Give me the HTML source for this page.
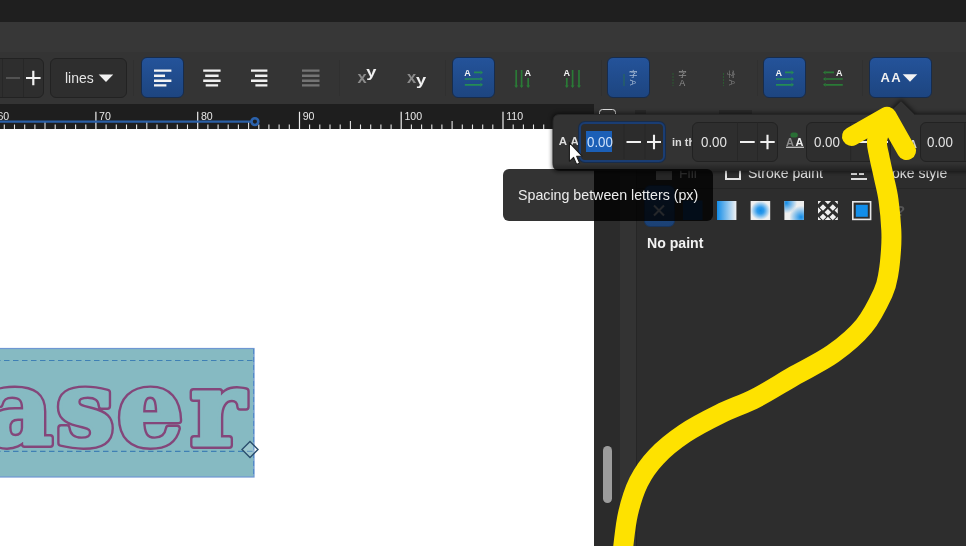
<!DOCTYPE html>
<html><head><meta charset="utf-8"><title>Inkscape text toolbar</title>
<style>
html,body{margin:0;padding:0;background:#2d2d2d;}
body{width:966px;height:546px;overflow:hidden;position:relative;font-family:"Liberation Sans","Noto Sans CJK SC",sans-serif;color:#e6e6e6;}
#root{position:absolute;left:0;top:0;width:966px;height:546px;overflow:hidden;background:#2d2d2d;filter:blur(0.45px);}
.abs{position:absolute;}
#titlebar{left:0;top:0;width:966px;height:22px;background:#1f1f1f;}
#menubar{left:0;top:22px;width:966px;height:29.5px;background:#373737;}
#toolbar{left:0;top:51.5px;width:966px;height:62.5px;background:#343434;}
#ruler{left:0;top:103.5px;width:594px;height:25.5px;background:#1e1e1e;overflow:hidden;}
#canvas{left:0;top:129px;width:594px;height:417px;background:#ffffff;}
.box{position:absolute;border:1px solid #222222;background:#2e2e2e;border-radius:6px;box-sizing:border-box;}
.btn{position:absolute;top:57.4px;height:41px;width:43px;margin-left:-0.5px;border-radius:6px;box-sizing:border-box;}
.btn.on{background:linear-gradient(#24539a,#1d4580);border:1px solid #172c4c;}
.sep{position:absolute;top:60px;height:36px;width:1px;background:#303030;}
.rl{position:absolute;top:6px;font-size:10.5px;color:#e8e8e8;letter-spacing:-0.2px;}
.num{position:absolute;font-size:14.9px;color:#e4e4e4;transform:scaleX(0.895);transform-origin:0 0;}
</style></head><body><div id="root">
<div id="titlebar" class="abs"></div>
<div id="menubar" class="abs"></div>
<div id="toolbar" class="abs"></div>
<!--TOOLBAR-S-->
<div class="box" style="left:-10px;top:58px;width:54px;height:40px;"></div>
<div class="box" style="left:50px;top:58px;width:77px;height:40px;"></div>
<div class="abs" style="left:65px;top:68.8px;font-size:15px;color:#e4e4e4;line-height:18px;transform:scaleX(0.93);transform-origin:0 0;">lines</div>
<div class="btn on" style="left:141.5px;"></div>
<div class="btn on" style="left:452.6px;"></div>
<div class="btn on" style="left:607.6px;"></div>
<div class="btn on" style="left:763.5px;"></div>
<div class="btn on" style="left:869.5px;width:62.5px;"></div>
<div class="sep" style="left:133px;"></div>
<div class="sep" style="left:339px;"></div>
<div class="sep" style="left:445px;"></div>
<div class="sep" style="left:601px;"></div>
<div class="sep" style="left:757px;"></div>
<div class="sep" style="left:862px;"></div>
<svg class="abs" style="left:0;top:52px;" width="966" height="52" viewBox="0 52 966 52">
 <g stroke="#272727" stroke-width="1"><path d="M2.5,59V97M23.5,59V97"/></g>
 <path d="M6,78H20" stroke="#525252" stroke-width="2"/>
 <path d="M26,78H40.6M33.3,70.7V85.3" stroke="#f2f2f2" stroke-width="2.2"/>
 <path d="M98.7,74.4H113.2L106,82Z" fill="#f2f2f2"/>
 <!-- align left -->
 <g stroke="#f4f4f4" stroke-width="2.4"><path d="M154,70.6H171.4M154,75.7H165M154,80.7H171.4M154,85.4H166.4"/></g>
 <g stroke="#f0f0f0" stroke-width="2.4"><path d="M203.2,70.6H220.6M205.2,75.7H218.6M203.2,80.7H220.6M205.7,85.4H218.1"/></g>
 <g stroke="#f0f0f0" stroke-width="2.4"><path d="M251,70.6H267.4M255,75.7H267.4M251,80.7H267.4M255.4,85.4H267.4"/></g>
 <g stroke="#747474" stroke-width="2.4"><path d="M302,70.6H319.5M302,75.7H319.5M302,80.7H319.5M302,85.4H319.5"/></g>
 <!-- super / sub script -->
 <g font-family="Liberation Sans, sans-serif" font-weight="bold">
 <text x="357.6" y="82.7" font-size="16.5" fill="#8a8a8a">x</text>
 <text transform="translate(366.3,76.5) scale(1.32,1)" font-size="13.8" fill="#f0f0f0">y</text>
 <text x="407.1" y="82.7" font-size="16.5" fill="#8a8a8a">x</text>
 <text transform="translate(416,84.7) scale(1.32,1)" font-size="13.8" fill="#f0f0f0">y</text>
 </g>
 <!-- horizontal text icon (on) -->
 <text x="464.3" y="75.8" font-family="Liberation Sans, sans-serif" font-weight="bold" font-size="9" fill="#f4f4f4">A</text>
 <g stroke="#258c55" stroke-width="1.7"><path d="M474,72.4H480.6M464.8,79H480.6M464.8,84.8H480.6"/></g>
 <!-- vertical RL -->
 <g stroke="#2a7a36" stroke-width="1.7"><path d="M516.2,70V86M521.6,70V86M528.2,78V86"/></g>
 <text x="524.6" y="75.8" font-family="Liberation Sans, sans-serif" font-weight="bold" font-size="9" fill="#f4f4f4">A</text>
 <!-- vertical LR -->
 <g stroke="#2a7a36" stroke-width="1.7"><path d="M566.8,78V86M572.6,70V86M579,70V86"/></g>
 <text x="563.6" y="75.8" font-family="Liberation Sans, sans-serif" font-weight="bold" font-size="9" fill="#f4f4f4">A</text>
 <!-- orientation icons -->
 <path d="M624,74V86" stroke="#2a6a55" stroke-width="1"/>
 <text x="629" y="77" font-family="Noto Sans CJK SC, sans-serif" font-size="8.5" fill="#a9bdd6">字</text>
 <text transform="translate(630,79.6) rotate(90)" x="0" y="0" font-family="Liberation Sans, sans-serif" font-size="9" fill="#a9bdd6">A</text>
 <path d="M673,73V86" stroke="#2a5a30" stroke-width="1" stroke-dasharray="2 1"/>
 <text x="678.3" y="77" font-family="Noto Sans CJK SC, sans-serif" font-size="8.5" fill="#8f8f8f">字</text>
 <text x="679.3" y="86" font-family="Liberation Sans, sans-serif" font-size="9" fill="#8f8f8f">A</text>
 <path d="M723.5,73V86" stroke="#2a5a30" stroke-width="1" stroke-dasharray="2 1"/>
 <text transform="translate(728,70) rotate(90)" x="0" y="0" font-family="Noto Sans CJK SC, sans-serif" font-size="8.5" fill="#7c7c7c">字</text>
 <text transform="translate(728.5,79.6) rotate(90)" x="0" y="0" font-family="Liberation Sans, sans-serif" font-size="9" fill="#7c7c7c">A</text>
 <!-- direction LTR (on) -->
 <text x="775.5" y="75.8" font-family="Liberation Sans, sans-serif" font-weight="bold" font-size="9" fill="#f4f4f4">A</text>
 <g stroke="#258c55" stroke-width="1.7"><path d="M785,72.4H791.6M776,79H791.6M776,84.8H791.6"/></g>
 <!-- direction RTL -->
 <text x="836" y="75.8" font-family="Liberation Sans, sans-serif" font-weight="bold" font-size="9" fill="#f4f4f4">A</text>
 <g stroke="#2a7a36" stroke-width="1.7"><path d="M825.6,72.4H834M825.6,79H842.8M825.6,84.8H842.8"/></g>
 <path d="M480.4,70.4l2.6,2l-2.6,2ZM480.4,77l2.6,2l-2.6,2ZM480.4,82.8l2.6,2l-2.6,2ZM791.4,70.4l2.6,2l-2.6,2ZM791.4,77l2.6,2l-2.6,2ZM791.4,82.8l2.6,2l-2.6,2Z" fill="#258c55"/>
 <path d="M514.2,85.5h4l-2,2.6ZM519.6,85.5h4l-2,2.6ZM526.2,85.5h4l-2,2.6ZM564.8,85.5h4l-2,2.6ZM570.6,85.5h4l-2,2.6ZM577,85.5h4l-2,2.6ZM825.6,70.4l-2.6,2l2.6,2ZM825.6,77l-2.6,2l2.6,2ZM825.6,82.8l-2.6,2l2.6,2Z" fill="#2a7a36"/>
 <!-- AA dropdown -->
 <text x="880.6" y="82.2" font-family="Liberation Sans, sans-serif" font-weight="bold" font-size="13" letter-spacing="1.2" fill="#f0f0f0">AA</text>
 <path d="M902.7,74.3H917.3L910,81.7Z" fill="#f4f4f4"/>
</svg>
<!--TOOLBAR-E-->
<!--RULER-S-->
<div id="ruler" class="abs"></div>
<svg class="abs" style="left:0;top:104px;" width="594" height="25" viewBox="0 104 594 25">
 <path d="M4.3,124.6V129M14.5,124.6V129M24.7,124.6V129M34.9,124.6V129M55.2,124.6V129M65.4,124.6V129M75.6,124.6V129M85.8,124.6V129M106.1,124.6V129M116.3,124.6V129M126.5,124.6V129M136.6,124.6V129M157.0,124.6V129M167.2,124.6V129M177.3,124.6V129M187.5,124.6V129M207.9,124.6V129M218.1,124.6V129M228.2,124.6V129M238.4,124.6V129M258.8,124.6V129M268.9,124.6V129M279.1,124.6V129M289.3,124.6V129M309.6,124.6V129M319.8,124.6V129M330.0,124.6V129M340.2,124.6V129M360.5,124.6V129M370.7,124.6V129M380.9,124.6V129M391.1,124.6V129M411.4,124.6V129M421.6,124.6V129M431.8,124.6V129M441.9,124.6V129M462.3,124.6V129M472.5,124.6V129M482.7,124.6V129M492.8,124.6V129M513.2,124.6V129M523.4,124.6V129M533.5,124.6V129M543.7,124.6V129M564.1,124.6V129M574.2,124.6V129M584.4,124.6V129" stroke="#e4e4e4" stroke-width="1.1"/>
 <path d="M45.0,121V129M146.8,121V129M248.6,121V129M350.4,121V129M452.1,121V129M553.9,121V129" stroke="#e4e4e4" stroke-width="1.1"/>
 <path d="M-5.8,111.8V129M95.9,111.8V129M197.7,111.8V129M299.5,111.8V129M401.2,111.8V129M503.0,111.8V129" stroke="#ececec" stroke-width="1.2"/>
 <text x="-2.6" y="120" font-family="Liberation Sans, sans-serif" font-size="10.6" fill="#e6e6e6">60</text>
 <text x="99.1" y="120" font-family="Liberation Sans, sans-serif" font-size="10.6" fill="#e6e6e6">70</text>
 <text x="200.9" y="120" font-family="Liberation Sans, sans-serif" font-size="10.6" fill="#e6e6e6">80</text>
 <text x="302.7" y="120" font-family="Liberation Sans, sans-serif" font-size="10.6" fill="#e6e6e6">90</text>
 <text x="404.4" y="120" font-family="Liberation Sans, sans-serif" font-size="10.6" fill="#e6e6e6">100</text>
 <text x="506.2" y="120" font-family="Liberation Sans, sans-serif" font-size="10.6" fill="#e6e6e6">110</text>
 <path d="M0,121.6H251" stroke="#2b60a8" stroke-width="2.2"/>
 <circle cx="254.9" cy="121.6" r="3.4" fill="#1e1e1e" stroke="#2b62ac" stroke-width="2.6"/>
</svg>
<!--RULER-E-->
<div id="canvas" class="abs"></div>
<!--CANVAS-S-->
<svg class="abs" style="left:0;top:129px;" width="594" height="417" viewBox="0 129 594 417">
 <rect x="-5" y="348.5" width="259" height="128.5" fill="#86bac2" stroke="#6e97d2" stroke-width="1.2"/>
 <g font-family="DejaVu Serif, Liberation Serif, serif" font-weight="bold" font-size="103" stroke-linejoin="round">
  <text id="lz1" x="-90 -14.2 56.2 117.4 190.6" y="445.2" fill="none" stroke="#84467a" stroke-width="7.8">Laser</text>
  <text id="lz2" x="-90 -14.2 56.2 117.4 190.6" y="445.2" fill="#86bac2" stroke="#86bac2" stroke-width="3">Laser</text>
 </g>
 <path d="M-5,360.5H253.5M-5,451.4H253.5" stroke="#3f80b4" stroke-width="1.1" stroke-dasharray="5.5 3.5"/>
 <path d="M253.6,349V477" stroke="#4f86c6" stroke-width="1" stroke-dasharray="5 3"/>
 <path d="M250,441.4L258,449.4L250,457.4L242,449.4Z" fill="#e9f3f5" fill-opacity="0.25" stroke="#2b4e6d" stroke-width="1.4"/>
</svg>
<!--CANVAS-E-->
<!--PANEL-S-->
<div class="abs" style="left:594px;top:103px;width:372px;height:443px;background:#2d2d2d;"></div>
<div class="abs" style="left:594px;top:103px;width:372px;height:11px;background:#343434;"></div>
<div class="abs" style="left:635px;top:110px;width:11px;height:5px;background:#2a2a2a;"></div>
<div class="abs" style="left:719px;top:110px;width:33px;height:5px;background:#2a2a2a;"></div>
<div class="abs" style="left:594px;top:114px;width:26px;height:432px;background:#2b2b2b;"></div>
<div class="abs" style="left:620px;top:114px;width:16px;height:432px;background:#333333;"></div>
<div class="abs" style="left:636px;top:114px;width:1px;height:432px;background:#262626;"></div>
<div class="abs" style="left:598.5px;top:108.5px;width:17.5px;height:14px;box-sizing:border-box;border:1.6px solid #dedede;border-radius:3.5px;"></div>
<div class="abs" style="left:637px;top:187.5px;width:329px;height:1px;background:#262626;"></div>
<div class="abs" style="left:602.5px;top:445.5px;width:9.5px;height:57.5px;border-radius:5px;background:#9c9c9c;"></div>
<!-- tabs -->
<div class="abs" style="left:655.5px;top:171px;width:16px;height:8.5px;background:#bdbdbd;"></div>
<div class="abs" style="left:678.5px;top:164.9px;font-size:15px;line-height:16px;color:#e0e0e0;transform:scaleX(0.935);transform-origin:0 0;">Fill</div>
<div class="abs" style="left:724.5px;top:164px;width:16px;height:15.5px;box-sizing:border-box;border:2.1px solid #e2e2e2;"></div>
<div class="abs" id="tsp" style="left:747.6px;top:164.9px;font-size:15px;line-height:16px;color:#e4e4e4;white-space:nowrap;transform:scaleX(0.935);transform-origin:0 0;">Stroke paint</div>
<div class="abs" style="left:851px;top:173px;width:5.5px;height:2px;background:#dcdcdc;"></div>
<div class="abs" style="left:859px;top:173px;width:4.5px;height:2px;background:#dcdcdc;"></div>
<div class="abs" style="left:851px;top:178px;width:16px;height:2px;background:#dcdcdc;"></div>
<div class="abs" id="tss" style="left:874px;top:164.9px;font-size:15px;line-height:16px;color:#e4e4e4;white-space:nowrap;transform:scaleX(0.935);transform-origin:0 0;">Stroke style</div>
<!-- paint type buttons -->
<div class="abs" style="left:643.5px;top:185px;width:31px;height:41.5px;border-radius:6px;background:linear-gradient(#1f4b87,#1b4175);border:1px solid #18345c;box-sizing:border-box;"></div>
<svg class="abs" style="left:636px;top:190px;" width="330" height="40" viewBox="636 190 330 40">
 <defs>
  <linearGradient id="lg" x1="0" x2="1" y1="0" y2="0"><stop offset="0" stop-color="#118ce8"/><stop offset="1" stop-color="#f2f2f2"/></linearGradient>
  <radialGradient id="rg" cx="0.5" cy="0.5" r="0.5"><stop offset="0" stop-color="#118ce8"/><stop offset="0.35" stop-color="#2f9bec"/><stop offset="1" stop-color="#f0f0f0"/></radialGradient>
  <radialGradient id="mg1" cx="0.1" cy="0.1" r="0.55"><stop offset="0" stop-color="#118ce8"/><stop offset="1" stop-color="#118ce8" stop-opacity="0"/></radialGradient>
  <radialGradient id="mg2" cx="0.85" cy="0.85" r="0.6"><stop offset="0" stop-color="#118ce8"/><stop offset="1" stop-color="#118ce8" stop-opacity="0"/></radialGradient>
 </defs>
 <path d="M654,205.5L664,215.5M664,205.5L654,215.5" stroke="#b9c3d1" stroke-width="2"/>
 <rect x="683" y="200.5" width="19.5" height="19.5" fill="#12447e"/>
 <rect x="717" y="201" width="19.4" height="19" fill="url(#lg)"/>
 <rect x="750.6" y="201" width="19.6" height="19" fill="url(#rg)"/>
 <rect x="784.4" y="201" width="19.6" height="19" fill="#eeeeee"/>
 <rect x="784.4" y="201" width="19.6" height="19" fill="url(#mg1)"/>
 <rect x="784.4" y="201" width="19.6" height="19" fill="url(#mg2)"/>
 <g fill="#f0f0f0">
  <path d="M818,201h4l3,3.5l3,-3.5h4l3,3.5l3,-3.5v6.3l-3,3.2l3,3.2v6.3l-3,-3.5l-3,3.5h-4l-3,-3.5l-3,3.5h-4v-6.3l3,-3.2l-3,-3.2Z" fill-rule="evenodd" opacity="0"/>
  <path d="M823,204.3l3.3,3.2l-3.3,3.2l-3.3,-3.2ZM832.8,204.3l3.3,3.2l-3.3,3.2l-3.3,-3.2ZM823,213.8l3.3,3.2l-3.3,3.2l-3.3,-3.2ZM832.8,213.8l3.3,3.2l-3.3,3.2l-3.3,-3.2ZM827.9,209l3.3,3.2l-3.3,3.2l-3.3,-3.2Z"/>
  <path d="M818,201h3.3l1.7,1.8l1.7,-1.8h6.4l1.7,1.8l1.7,-1.8h1.4v3.5l-1.3,1.4l1.3,1.4v6.5l-1.3,1.4l1.3,1.4v3.4h-1.4l-1.7,-1.8l-1.7,1.8h-6.4l-1.7,-1.8l-1.7,1.8h-3.3v-3.4l1.5,-1.4l-1.5,-1.4v-6.5l1.5,-1.4l-1.5,-1.4Z" opacity="0"/>
  <path d="M818,201h3.2l-3.2,3.2ZM837.8,201v3.2l-3.2,-3.2ZM818,220v-3.2l3.2,3.2ZM837.8,220h-3.2l3.2,-3.2ZM824.7,201h6.4l-3.2,3.2ZM824.7,220h6.4l-3.2,-3.2ZM818,207.3l3.2,3.2l-3.2,3.2ZM837.8,207.3l-3.2,3.2l3.2,3.2Z"/>
 </g>
 <rect x="852.8" y="201.8" width="17.8" height="17.6" fill="none" stroke="#e8e8e8" stroke-width="1.6"/>
 <rect x="855.8" y="204.8" width="12" height="12" fill="#128ee9"/>
 <text x="896" y="216" font-family="Liberation Sans, sans-serif" font-weight="bold" font-size="15" fill="#555">?</text>
</svg>
<div class="abs" id="nopaint" style="left:647.3px;top:233.8px;font-size:15px;font-weight:bold;line-height:18px;color:#f2f2f2;white-space:nowrap;transform:scaleX(0.94);transform-origin:0 0;">No paint</div>
<!--PANEL-E-->
<!--POPOVER-S-->
<svg class="abs" style="left:540px;top:96px;" width="426" height="80" viewBox="540 96 426 80">
 <defs><filter id="sh" x="-5%" y="-20%" width="110%" height="150%"><feGaussianBlur stdDeviation="2.2"/></filter></defs>
 <path d="M559,113H886L901,99L916,113H980V172H559Q552,172 552,166V119Q552,113 559,113Z" fill="#000" opacity="0.55" filter="url(#sh)"/>
 <path d="M559.5,114.5H887.5L901,101L914.5,114.5H980V170.2H559.5Q553,170.2 553,163.7V121Q553,114.5 559.5,114.5Z" fill="#333333" stroke="#262626" stroke-width="1"/>
 <defs><linearGradient id="pbg" x1="0" x2="0" y1="0" y2="1"><stop offset="0" stop-color="#000" stop-opacity="0"/><stop offset="1" stop-color="#000" stop-opacity="0.3"/></linearGradient></defs>
 <path d="M553.5,163H980V169.8H559.5Q553.5,169.8 553.5,164Z" fill="url(#pbg)"/>
</svg>
<div class="abs" style="left:558.7px;top:134px;font-size:11.5px;font-weight:bold;line-height:14px;letter-spacing:3.4px;color:#dedede;">AA</div>
<div class="abs" style="left:578.5px;top:121.5px;width:86px;height:40px;box-sizing:border-box;border-radius:6px;border:2px solid #1a3d73;background:#2c2c2c;box-shadow:0 0 0 1px #182c4a;"></div>
<div class="abs" style="left:586.3px;top:131.2px;width:26px;height:20.5px;background:#1b5fb6;"></div>
<div class="num" style="left:586.6px;top:132.8px;color:#cfe2fa;line-height:18px;">0.00</div>
<div class="box" style="left:692.3px;top:121.5px;width:85.4px;height:40px;"></div>
<div class="num" style="left:700.6px;top:132.8px;line-height:18px;">0.00</div>
<div class="box" style="left:805.6px;top:121.5px;width:85.4px;height:40px;"></div>
<div class="num" style="left:813.7px;top:132.8px;line-height:18px;">0.00</div>
<div class="box" style="left:919.7px;top:121.5px;width:85.4px;height:40px;"></div>
<div class="num" style="left:927.2px;top:132.8px;line-height:18px;">0.00</div>
<div class="abs" style="left:672px;top:135px;font-size:11px;font-weight:bold;line-height:14px;color:#dcdcdc;white-space:nowrap;width:19.8px;overflow:hidden;">in the</div>
<svg class="abs" style="left:553px;top:114px;" width="413" height="56" viewBox="553 114 413 56">
 <g stroke="#272727" stroke-width="1"><path d="M624,124V159M645,124V159M737.5,122.5V160.5M757.5,122.5V160.5M850.6,122.5V160.5M870.6,122.5V160.5M964.7,122.5V160.5"/></g>
 <g stroke="#f0f0f0" stroke-width="2.1"><path d="M626.5,142H641M647,142H661M654,134.8V149.2"/><path d="M740,142H754.7M760.3,142H774.7M767.5,134.8V149.2"/><path d="M853.3,142H868M873.5,142H888M880.7,134.8V149.2"/></g>
 <text x="786" y="145.6" font-family="Liberation Sans, sans-serif" font-weight="bold" font-size="11" fill="#8c8c8c">A</text>
 <text x="795.6" y="145.6" font-family="Liberation Sans, sans-serif" font-weight="bold" font-size="11" fill="#f0f0f0">A</text>
 <path d="M786,147.3H804" stroke="#cfcfcf" stroke-width="1.2"/>
 <rect x="790.4" y="132.4" width="7.4" height="5.2" rx="2.5" fill="#296f35"/>
 <text x="909" y="148" font-family="Liberation Sans, sans-serif" font-weight="bold" font-size="11" fill="#cfcfcf">A</text>
</svg>
<!--POPOVER-E-->
<!--TOOLTIP-S-->
<div class="abs" style="left:502.5px;top:169px;width:210.5px;height:51.5px;border-radius:6px;background:rgba(0,0,0,0.8);"></div>
<div class="abs" id="tiptext" style="left:517.6px;top:185.5px;font-size:15px;line-height:18px;color:#ececec;white-space:nowrap;transform:scaleX(0.948);transform-origin:0 0;">Spacing between letters (px)</div>
<svg class="abs" style="left:560px;top:135px;" width="30" height="36" viewBox="-2 -2 30 36">
 <path d="M7.4,5.7V24.3L11.6,20.4L14.6,27.4L17.6,26.1L14.7,19.3H20.3Z" fill="#ffffff" stroke="#1a1a1a" stroke-width="1.1" stroke-linejoin="round"/>
</svg>
<!--TOOLTIP-E-->
<!--ARROW-S-->
<svg class="abs" style="left:0;top:0;" width="966" height="546" viewBox="0 0 966 546">
 <g fill="none" stroke="#fee200" stroke-linecap="round" stroke-linejoin="round">
  <path stroke-width="20" d="M622.0,560.0 C622.2,557.7 622.3,553.7 623.3,546.0 C624.3,538.3 625.5,524.4 628.0,513.7 C630.5,503.0 633.9,491.5 638.6,482.0 C643.3,472.5 648.6,464.9 656.3,456.8 C663.9,448.7 673.9,440.6 684.5,433.5 C695.1,426.4 707.8,419.9 719.8,414.0 C731.8,408.1 744.1,404.1 756.3,397.8 C768.5,391.6 780.2,383.9 793.0,376.5 C805.8,369.1 821.2,362.1 833.0,353.7 C844.8,345.3 855.7,336.1 864.0,326.0 C872.3,315.9 878.9,301.8 883.0,293.0 C887.1,284.2 887.2,280.2 888.5,273.0 C889.8,265.8 890.5,257.2 891.0,250.0 C891.5,242.8 891.7,238.3 891.3,230.0 C890.9,221.7 889.7,208.7 888.5,200.0 C887.3,191.3 885.6,185.5 884.0,178.0 C882.4,170.5 880.2,161.2 879.0,155.0 C877.8,148.8 876.5,146.2 877.0,141.0 C877.5,135.8 881.2,126.8 882.0,124.0"/>
  <path stroke-width="19" d="M851.5,136.4L887,116.2L906.5,150.6"/>
 </g>
</svg>
<!--ARROW-E-->
</div></body></html>
